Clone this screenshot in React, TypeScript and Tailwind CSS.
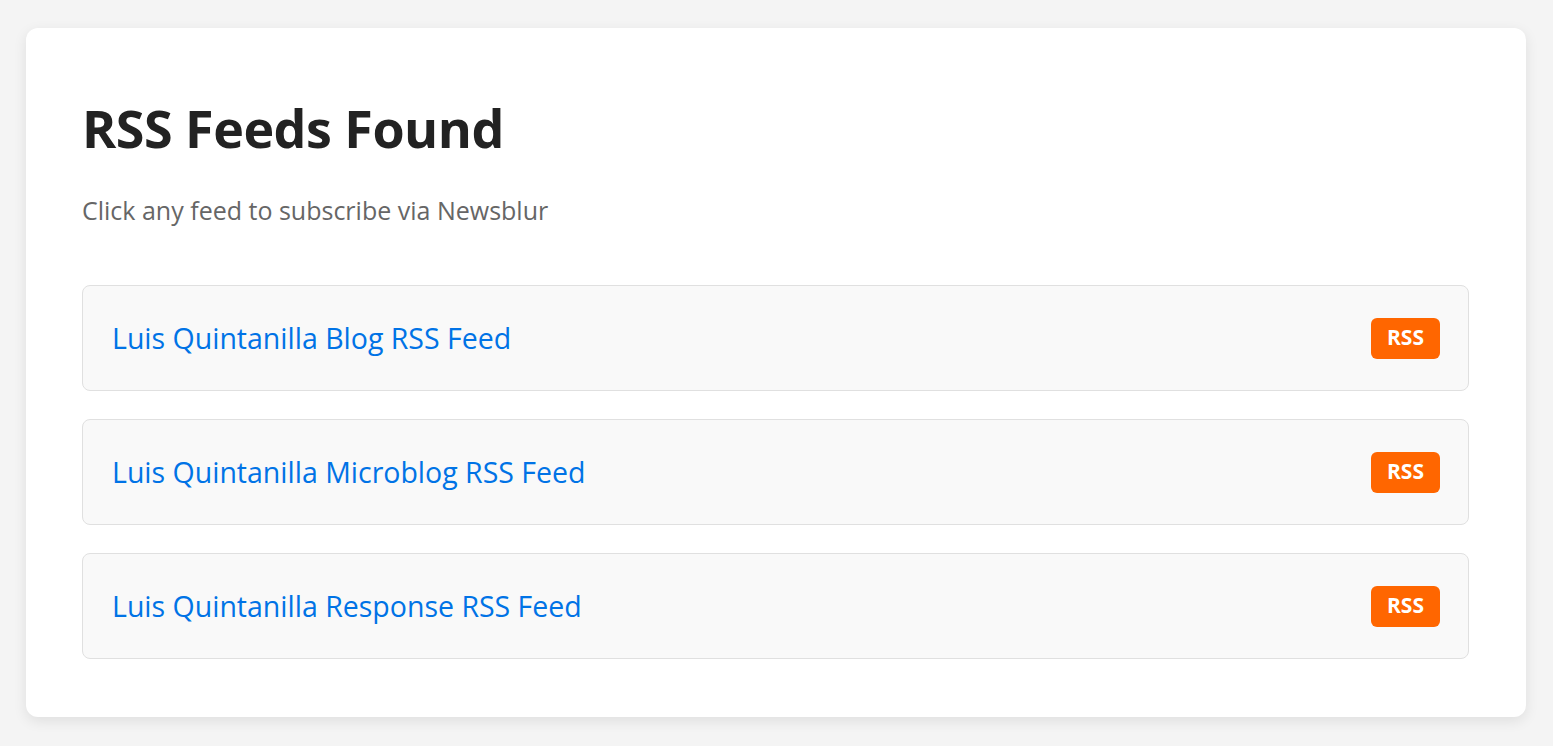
import React from "react";

const feeds = [
  "Luis Quintanilla Blog RSS Feed",
  "Luis Quintanilla Microblog RSS Feed",
  "Luis Quintanilla Response RSS Feed",
];

export default function App() {
  return (
    <div className="min-h-[746px] bg-[#f4f4f4] pt-[28px] pb-[29px] font-['Open_Sans',sans-serif]">
      <div className="ml-[26px] w-[1500px] rounded-[12px] bg-white pl-[56px] pr-[57px] pt-[70px] pb-[58px] shadow-[0_4px_14px_rgba(0,0,0,0.09)]">
        <h1 className="text-[52px] leading-[60px] font-bold text-[#222222] tracking-[-0.5px]">RSS Feeds Found</h1>
        <p className="mt-[35px] text-[25px] leading-[34px] text-[#666666]">Click any feed to subscribe via Newsblur</p>
        <div className="mt-[58px] flex flex-col gap-[28px]">
          {feeds.map((f) => (
            <div
              key={f}
              className="flex h-[106px] items-center justify-between rounded-[8px] border border-[#e0e0e0] bg-[#f9f9f9] pl-[29px] pr-[28px]"
            >
              <a className="text-[28.5px] leading-[38px] text-[#0073e6]">{f}</a>
              <span className="flex h-[41px] w-[69px] items-center justify-center rounded-[6px] bg-[#ff6600] text-[21px] font-bold text-white">
                RSS
              </span>
            </div>
          ))}
        </div>
      </div>
    </div>
  );
}
